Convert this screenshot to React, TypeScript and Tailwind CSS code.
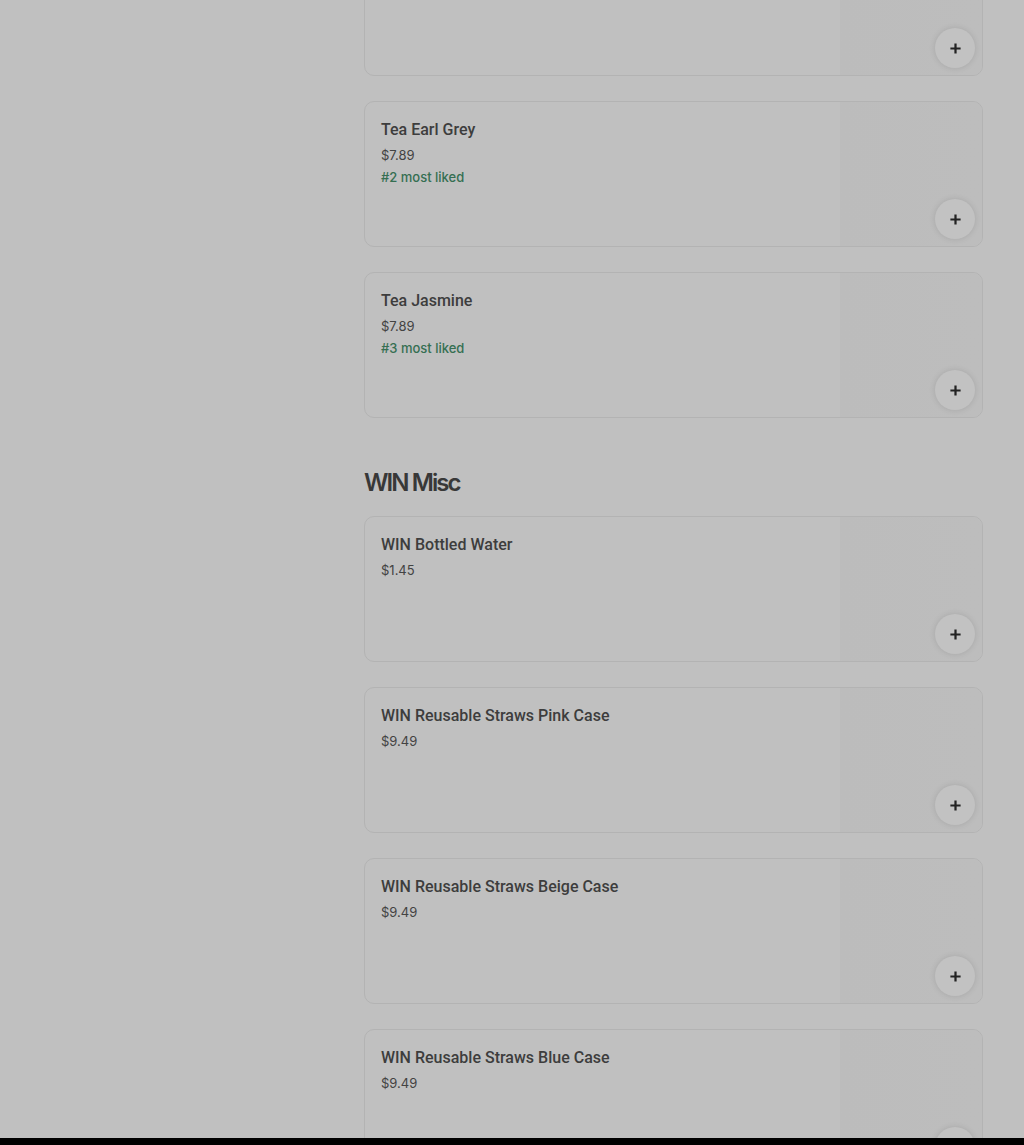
const PlusIcon = () => (
  <svg width="13" height="13" viewBox="0 0 14 14" fill="none">
    <path d="M7 1.5v11M1.5 7h11" stroke="#222222" strokeWidth="2.4" />
  </svg>
);

type Item = { name: string; price: string; liked?: string };

const ItemCard = ({ item }: { item: Item }) => (
  <div className="relative flex h-[146px] overflow-hidden rounded-[10px] border border-[#b3b3b3] bg-[#c0c0c0]">
    <div className="flex-1 px-4 pt-4">
      <div
        className="text-[16px] leading-6 font-medium text-[#3d3d3d]"
        style={{ fontFamily: "Roboto, 'Noto Sans', sans-serif" }}
      >
        {item.name}
      </div>
      <div className="mt-[3px] text-[13px] leading-5 text-[#434343]">{item.price}</div>
      {item.liked && (
        <div className="mt-[2px] text-[13px] leading-5 font-medium text-[#356f52]">{item.liked}</div>
      )}
    </div>
    <div className="w-[142px] bg-gradient-to-r from-[#bcbcbc] to-[#bdbdbd]" />
    <button className="absolute bottom-[7px] right-[7px] flex h-10 w-10 items-center justify-center rounded-full bg-[#c2c2c2] shadow-[0_0_6px_rgba(0,0,0,0.12)]">
      <PlusIcon />
    </button>
  </div>
);

const teas: Item[] = [
  { name: "Tea Green", price: "$7.89" },
  { name: "Tea Earl Grey", price: "$7.89", liked: "#2 most liked" },
  { name: "Tea Jasmine", price: "$7.89", liked: "#3 most liked" },
];

const misc: Item[] = [
  { name: "WIN Bottled Water", price: "$1.45" },
  { name: "WIN Reusable Straws Pink Case", price: "$9.49" },
  { name: "WIN Reusable Straws Beige Case", price: "$9.49" },
  { name: "WIN Reusable Straws Blue Case", price: "$9.49" },
];

export default function App() {
  return (
    <div
      className="relative h-[1145px] overflow-hidden bg-[#c0c0c0]"
      style={{ fontFamily: "Inter, 'Noto Sans', sans-serif" }}
    >
      <div className="flex">
        <aside className="w-[364px] shrink-0" />
        <main className="w-[619px] -mt-[70px]">
          <div className="flex flex-col gap-[25px]">
            {teas.map((t) => (
              <ItemCard key={t.name} item={t} />
            ))}
          </div>

          <h2 className="mt-[49px] mb-[17px] text-[24px] leading-8 font-semibold tracking-[-0.08em] text-[#383838]">
            WIN Misc
          </h2>

          <div className="flex flex-col gap-[25px]">
            {misc.map((m) => (
              <ItemCard key={m.name} item={m} />
            ))}
          </div>
        </main>
      </div>

      <div className="absolute bottom-0 left-0 h-[7px] w-full bg-black" />
    </div>
  );
}
